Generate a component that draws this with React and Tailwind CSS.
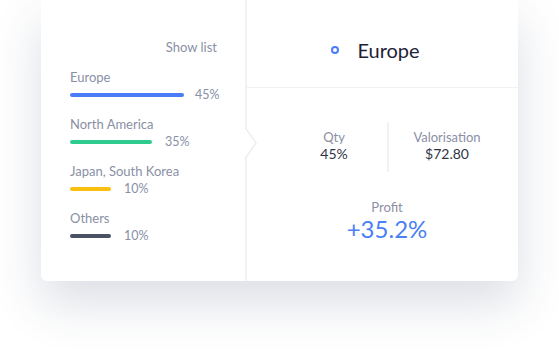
import React from 'react'

const regions = [
  { name: 'Europe', pct: 45, width: 114, color: 'bg-[#4a7cf7]', gap: 'ml-[11px]' },
  { name: 'North America', pct: 35, width: 82, color: 'bg-[#2fcb8e]', gap: 'ml-[13px]' },
  { name: 'Japan, South Korea', pct: 10, width: 41, color: 'bg-[#fbbf10]', gap: 'ml-[13px]' },
  { name: 'Others', pct: 10, width: 41, color: 'bg-[#4b5266]', gap: 'ml-[13px]' },
]

function RegionRow({ region }) {
  return (
    <div className="flex flex-col">
      <span className="text-[13px] leading-4 text-[#8a8fa5]">{region.name}</span>
      <div className="mt-[2px] flex h-4 items-center">
        <div className={`h-[4px] shrink-0 rounded-full ${region.color}`} style={{ width: region.width }} />
        <span className={`${region.gap} shrink-0 text-[12.5px] leading-4 text-[#8a8fa5]`}>{region.pct}%</span>
      </div>
    </div>
  )
}

export default function App() {
  return (
    <div
      className="h-[357px] w-[559px] overflow-hidden bg-white"
      style={{ fontFamily: 'Lato, "Open Sans", sans-serif' }}
    >
      <div className="ml-[41px] flex h-[281px] w-[477px] rounded-b-md bg-white shadow-[0_22px_48px_rgba(40,60,95,0.17)]">
        {/* left panel */}
        <div className="relative w-[206px] shrink-0 border-r-2 border-[#f1f2f5] pl-[29px] pr-[28px] pt-[39px]">
          <div className="text-right text-[13px] leading-4 text-[#8a8fa5]">Show list</div>
          <div className="mt-[14px] flex flex-col gap-[13px]">
            {regions.map((r) => (
              <RegionRow key={r.name} region={r} />
            ))}
          </div>
          <svg
            className="absolute right-[-13px] top-[127px]"
            width="14"
            height="32"
            viewBox="0 0 14 32"
          >
            <polygon points="0,0 12,16 0,32" fill="#ffffff" />
            <polyline points="1,0 12,16 1,32" fill="none" stroke="#eceef2" strokeWidth="1.5" />
          </svg>
        </div>

        {/* right panel */}
        <div className="flex flex-1 flex-col">
          <div className="flex h-[88px] items-center justify-center border-b border-[#eef0f3] pt-3 pr-[14px]">
            <span className="h-[8px] w-[8px] rounded-full border-2 border-[#4a7cf7]" />
            <span className="ml-[18px] text-[20px] leading-6 text-[#1d2236]">Europe</span>
          </div>

          <div className="mt-[34px] ml-[34px] flex h-[50px]">
            <div className="flex w-[106px] flex-col items-center pt-[7px]">
              <span className="text-[13px] leading-4 text-[#8a8fa5]">Qty</span>
              <span className="text-[14px] leading-[18px] text-[#2f3443]">45%</span>
            </div>
            <div className="flex w-[118px] flex-col items-center border-l-2 border-[#f1f2f5] pt-[7px]">
              <span className="text-[13px] leading-4 text-[#8a8fa5]">Valorisation</span>
              <span className="text-[14px] leading-[18px] text-[#2f3443]">$72.80</span>
            </div>
          </div>

          <div className="mt-[27px] ml-[34px] flex w-[212px] flex-col items-center">
            <span className="text-[13px] leading-4 text-[#8a8fa5]">Profit</span>
            <span className="text-[24px] leading-[28px] text-[#4a80f6]">+35.2%</span>
          </div>
        </div>
      </div>
    </div>
  )
}
